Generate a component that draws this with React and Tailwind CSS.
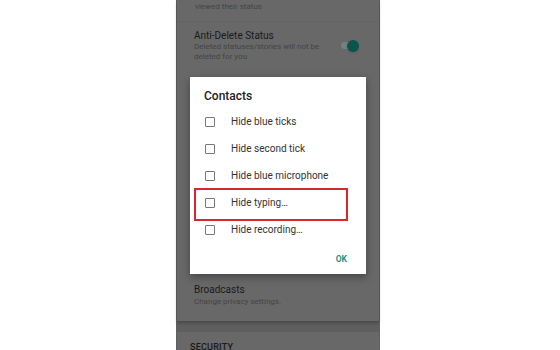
import React from 'react';

const options = ['Hide blue ticks', 'Hide second tick', 'Hide blue microphone', 'Hide typing…', 'Hide recording…'];

const Toggle = () => (
    <div className="relative w-[18px] h-[12px] flex items-center shrink-0">
        <div className="w-[16px] h-[7px] rounded-full bg-[#6d8480]"></div>
        <div className="absolute right-0 w-[12px] h-[12px] rounded-full bg-[#0b544c] shadow"></div>
    </div>
);

export default function App() {
    return (
        <div className="relative w-[560px] h-[350px] bg-white overflow-hidden font-['Roboto',sans-serif]">
            {/* Dimmed settings screen */}
            <div className="ml-[176px] w-[204px] h-full bg-[#5f5f5f] flex flex-col">
                <div className="mx-[1px] bg-[#686868] shadow-[0_2px_3px_rgba(0,0,0,0.25)]">
                    <div className="pl-[18px] pb-[8px] border-b border-[#636363]">
                        <p className="text-[8px] leading-[13px] text-[#444]">viewed their status</p>
                    </div>
                    <div className="pl-[17px] pr-[20px] pt-[7px] pb-[5px] flex items-center">
                        <div className="flex-1">
                            <p className="text-[10px] leading-[13px] text-[#1a1a1a]">Anti-Delete Status</p>
                            <p className="text-[8px] leading-[10px] text-[#444]">Deleted statuses/stories will not be<br />deleted for you</p>
                        </div>
                        <Toggle />
                    </div>
                    <div className="h-[216px]"></div>
                    <div className="pl-[17px] pt-0 pb-[14px]">
                        <p className="text-[10px] leading-[13px] text-[#1a1a1a]">Broadcasts</p>
                        <p className="text-[8px] leading-[11px] text-[#444]">Change privacy settings.</p>
                    </div>
                </div>
                <div className="mt-[11px] mx-[1px] flex-1 bg-[#686868] pl-[13px] pt-[9px]">
                    <p className="text-[9px] leading-[12px] font-medium tracking-wide text-[#1a1a1a]">SECURITY</p>
                </div>
            </div>

            {/* Dialog */}
            <div className="absolute left-[190px] top-[77px] w-[176px] h-[197px] bg-white shadow-[0_3px_8px_rgba(0,0,0,0.35)] flex flex-col">
                <p className="pl-[14px] pt-[11px] text-[12px] leading-[16px] font-medium text-[#222]">Contacts</p>
                <div className="mt-[4px] flex flex-col">
                    {options.map((label) => (
                        <div key={label} className="h-[27px] pl-[15px] flex items-center">
                            <div className="w-[10px] h-[10px] border-[1.5px] border-[#777] rounded-[1px] shrink-0"></div>
                            <span className="ml-[16px] text-[10px] text-[#333]">{label}</span>
                        </div>
                    ))}
                </div>
                <div className="mt-auto pb-[8px] pr-[19px] flex justify-end">
                    <span className="text-[8.5px] font-bold text-[#1f8f86]">OK</span>
                </div>
            </div>

            {/* Highlight annotation */}
            <div className="absolute left-[194px] top-[188px] w-[154px] h-[33px] border-2 border-[#d7282f]"></div>
        </div>
    );
}
